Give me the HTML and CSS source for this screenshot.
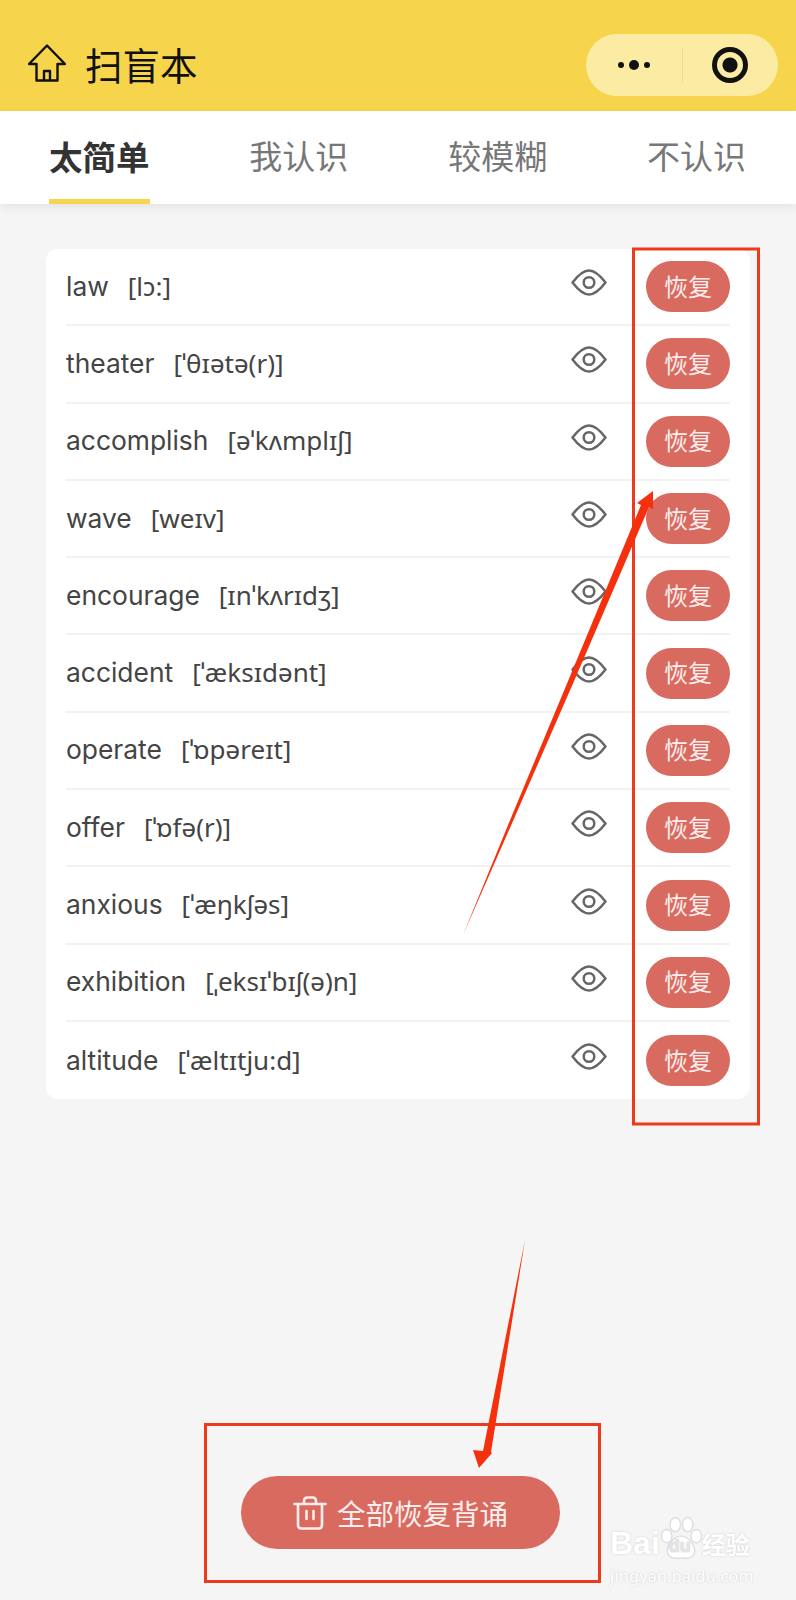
FILE: index.html
```html
<!DOCTYPE html>
<html lang="zh">
<head>
  <meta charset="UTF-8">
  <meta name="viewport" content="width=device-width, initial-scale=1.0">
  <title>扫盲本</title>
  <link rel="stylesheet" href="styles.css">
</head>
<body>
  <header class="topbar">
    <svg class="home-icon" viewBox="0 0 38 38" fill="none" stroke="#111" stroke-width="2.4" stroke-linejoin="round">
      <path d="M19 1.5 L37 20 L29.5 20 L29.5 36.5 L8.5 36.5 L8.5 20 L1 20 Z"/>
      <path d="M16 36.5 V27 H22 V36.5"/>
    </svg>
    <h1 class="title">扫盲本</h1>
    <div class="capsule">
      <div class="capsule-side">
        <span class="dot"></span><span class="dot dot-big"></span><span class="dot"></span>
      </div>
      <div class="capsule-side capsule-right">
        <span class="target"></span>
      </div>
    </div>
  </header>

  <nav class="tabs">
    <div class="tab active">太简单</div>
    <div class="tab">我认识</div>
    <div class="tab">较模糊</div>
    <div class="tab">不认识</div>
  </nav>

  <main class="content">
    <section class="card">
      <div class="row">
        <div class="word">law<span class="phonetic">[lɔ:]</span></div>
        <svg class="eye" viewBox="0 0 36 27"><use href="#eye-icon"/></svg>
        <button class="restore">恢复</button>
      </div>
      <div class="row">
        <div class="word">theater<span class="phonetic">[ˈθɪətə(r)]</span></div>
        <svg class="eye" viewBox="0 0 36 27"><use href="#eye-icon"/></svg>
        <button class="restore">恢复</button>
      </div>
      <div class="row">
        <div class="word">accomplish<span class="phonetic">[əˈkʌmplɪʃ]</span></div>
        <svg class="eye" viewBox="0 0 36 27"><use href="#eye-icon"/></svg>
        <button class="restore">恢复</button>
      </div>
      <div class="row">
        <div class="word">wave<span class="phonetic">[weɪv]</span></div>
        <svg class="eye" viewBox="0 0 36 27"><use href="#eye-icon"/></svg>
        <button class="restore">恢复</button>
      </div>
      <div class="row">
        <div class="word">encourage<span class="phonetic">[ɪnˈkʌrɪdʒ]</span></div>
        <svg class="eye" viewBox="0 0 36 27"><use href="#eye-icon"/></svg>
        <button class="restore">恢复</button>
      </div>
      <div class="row">
        <div class="word">accident<span class="phonetic">[ˈæksɪdənt]</span></div>
        <svg class="eye" viewBox="0 0 36 27"><use href="#eye-icon"/></svg>
        <button class="restore">恢复</button>
      </div>
      <div class="row">
        <div class="word">operate<span class="phonetic">[ˈɒpəreɪt]</span></div>
        <svg class="eye" viewBox="0 0 36 27"><use href="#eye-icon"/></svg>
        <button class="restore">恢复</button>
      </div>
      <div class="row">
        <div class="word">offer<span class="phonetic">[ˈɒfə(r)]</span></div>
        <svg class="eye" viewBox="0 0 36 27"><use href="#eye-icon"/></svg>
        <button class="restore">恢复</button>
      </div>
      <div class="row">
        <div class="word">anxious<span class="phonetic">[ˈæŋkʃəs]</span></div>
        <svg class="eye" viewBox="0 0 36 27"><use href="#eye-icon"/></svg>
        <button class="restore">恢复</button>
      </div>
      <div class="row">
        <div class="word">exhibition<span class="phonetic">[ˌeksɪˈbɪʃ(ə)n]</span></div>
        <svg class="eye" viewBox="0 0 36 27"><use href="#eye-icon"/></svg>
        <button class="restore">恢复</button>
      </div>
      <div class="row">
        <div class="word">altitude<span class="phonetic">[ˈæltɪtju:d]</span></div>
        <svg class="eye" viewBox="0 0 36 27"><use href="#eye-icon"/></svg>
        <button class="restore">恢复</button>
      </div>
    </section>

    <button class="restore-all">
      <svg class="trash" viewBox="0 0 34 34" fill="none" stroke="#fbeeec" stroke-width="2.6" stroke-linecap="round" stroke-linejoin="round">
        <path d="M1.5 8 H32.5"/>
        <path d="M11 8 V5 Q11 1.5 14.5 1.5 H19.5 Q23 1.5 23 5 V8"/>
        <path d="M5 8 V29 Q5 32.5 8.5 32.5 H25.5 Q29 32.5 29 29 V8"/>
        <path d="M13.5 15 V23"/>
        <path d="M20.5 15 V23"/>
      </svg>
      全部恢复背诵
    </button>
  </main>

  <!-- screenshot annotations, drawn on top of the page -->
  <svg class="marks" viewBox="0 0 796 1600">
    <rect x="633.5" y="249" width="125" height="875" fill="none" stroke="#ee3a1c" stroke-width="3"/>
    <rect x="205.5" y="1424.5" width="394" height="157" fill="none" stroke="#ee3a1c" stroke-width="3"/>
    <polygon points="463,935 513,813 568.5,680 641,505 637,503 653,491 653,509 649,507 574.5,680 516.5,813" fill="#f5300d"/>
    <polygon points="525,1240 491,1452 492,1453 479,1468 473,1450 483,1451" fill="#f5300d"/>
  </svg>

  <div class="watermark">
    <div class="wm-logo">
      <span>Bai</span>
      <div class="wm-paw">
        <svg class="paw" viewBox="0 0 44 46" fill="#fff" stroke="#dedede" stroke-width="1.5">
          <ellipse cx="7" cy="20" rx="5.5" ry="7"/>
          <ellipse cx="16" cy="8" rx="5.5" ry="7.5"/>
          <ellipse cx="29" cy="8" rx="5.5" ry="7.5"/>
          <ellipse cx="38" cy="20" rx="5.5" ry="7"/>
          <path d="M22 20 C30 20 38 31 36 38 C33 45 27 43 22 43 C17 43 11 45 8 38 C6 31 14 20 22 20Z"/>
        </svg>
        <span class="wm-du">du</span>
      </div>
      <span class="wm-cn">经验</span>
    </div>
    <div class="wm-url">jingyan.baidu.com</div>
  </div>

  <svg class="icon-defs" width="0" height="0">
    <symbol id="eye-icon" viewBox="0 0 36 27">
      <path d="M1.5 13.5 C8 5 13 1.5 18 1.5 C23 1.5 28 5 34.5 13.5 C28 22 23 25.5 18 25.5 C13 25.5 8 22 1.5 13.5Z" fill="none" stroke="#666" stroke-width="2.5" stroke-linejoin="round"/>
      <circle cx="18" cy="13.5" r="5.3" fill="none" stroke="#666" stroke-width="2.5"/>
    </symbol>
  </svg>
</body>
</html>
```

FILE: styles.css
```css
* {
  box-sizing: border-box;
}
body {
  position: relative;
  width: 796px;
  height: 1600px;
  margin: 0;
  overflow: hidden;
  background: #f5f5f5;
  font-family: "Noto Sans", "Noto Sans CJK SC", sans-serif;
}
.topbar {
  display: flex;
  align-items: center;
  height: 111px;
  padding: 18px 18px 0 28px;
  background: #f6d44b;
}
.home-icon {
  width: 38px;
  height: 38px;
  margin-bottom: 3px;
}
.title {
  margin: 0 0 2px 19px;
  font-size: 37.5px;
  font-weight: 400;
  color: #111;
}
.capsule {
  display: flex;
  margin-left: auto;
  width: 192px;
  height: 62px;
  border-radius: 31px;
  background: #fceca3;
}
.capsule-side {
  display: flex;
  flex: 1;
  align-items: center;
  justify-content: center;
  gap: 5px;
}
.capsule-right {
  margin: 14px 0;
  border-left: 1px solid #eddc8e;
}
.dot {
  width: 6px;
  height: 6px;
  border-radius: 50%;
  background: #111;
}
.dot-big {
  width: 10px;
  height: 10px;
}
.target {
  width: 36px;
  height: 36px;
  border: 5px solid #111;
  border-radius: 50%;
  background: radial-gradient(circle, #111 0 7px, transparent 8px);
}
.tabs {
  display: flex;
  justify-content: space-between;
  height: 93px;
  padding: 0 50px 0 49px;
  background: #fff;
  box-shadow: 0 3px 10px rgba(0,0,0,0.08);
}
.tab {
  display: flex;
  align-items: center;
  height: 93px;
  border-bottom: 5px solid transparent;
  font-size: 33px;
  color: #777;
}
.tab.active {
  border-bottom-color: #f6d44b;
  font-size: 33.5px;
  font-weight: 700;
  color: #333;
}
.content {
  padding: 45px 46px 0;
}
.card {
  padding: 0 20px;
  border-radius: 12px;
  background: #fff;
}
.row {
  display: flex;
  align-items: center;
  height: 77.3px;
  border-bottom: 2px solid #f2f2f2;
}
.row:last-child {
  border-bottom: none;
}
.word {
  flex: 1;
  padding-bottom: 2px;
  font-family: "Inter", "Noto Sans", sans-serif;
  font-size: 26.4px;
  color: #444;
}
.phonetic {
  margin-left: 19px;
  font-family: "Noto Sans", sans-serif;
  font-size: 26px;
}
.eye {
  width: 36px;
  height: 27px;
  margin: 0 39px 8px 0;
}
.restore {
  width: 84px;
  height: 51px;
  padding: 0 0 3px;
  border: none;
  border-radius: 26px;
  background: #d96a60;
  font-family: inherit;
  font-size: 24px;
  color: #fbeeec;
}
.restore-all {
  display: flex;
  align-items: center;
  justify-content: center;
  gap: 10px;
  width: 319px;
  height: 73px;
  margin: 377px 0 0 195px;
  padding: 0;
  border: none;
  border-radius: 37px;
  background: #d96a60;
  font-family: inherit;
  font-size: 28.5px;
  color: #fbeeec;
}
.trash {
  width: 34px;
  height: 34px;
}
.marks {
  position: absolute;
  left: 0;
  top: 0;
  width: 796px;
  height: 1600px;
}
.watermark {
  position: absolute;
  left: 610px;
  top: 1514px;
  width: 150px;
  color: #fff;
  text-shadow: 0 0 2px #c8c8c8;
}
.wm-logo {
  display: flex;
  align-items: flex-end;
  height: 48px;
  font-family: "Liberation Sans", sans-serif;
  font-size: 32px;
  font-weight: 700;
  line-height: 38px;
}
.wm-paw {
  position: relative;
  width: 42px;
  height: 46px;
}
.paw {
  width: 42px;
  height: 46px;
}
.wm-du {
  position: absolute;
  left: 9px;
  top: 18px;
  font-size: 18px;
  line-height: 24px;
  color: #e4e4e4;
}
.wm-cn {
  font-family: "Noto Sans CJK SC", sans-serif;
  font-size: 24px;
  line-height: 36px;
}
.wm-url {
  margin-top: 3px;
  font-size: 16px;
  letter-spacing: 0.3px;
}
.icon-defs {
  position: absolute;
}
```
